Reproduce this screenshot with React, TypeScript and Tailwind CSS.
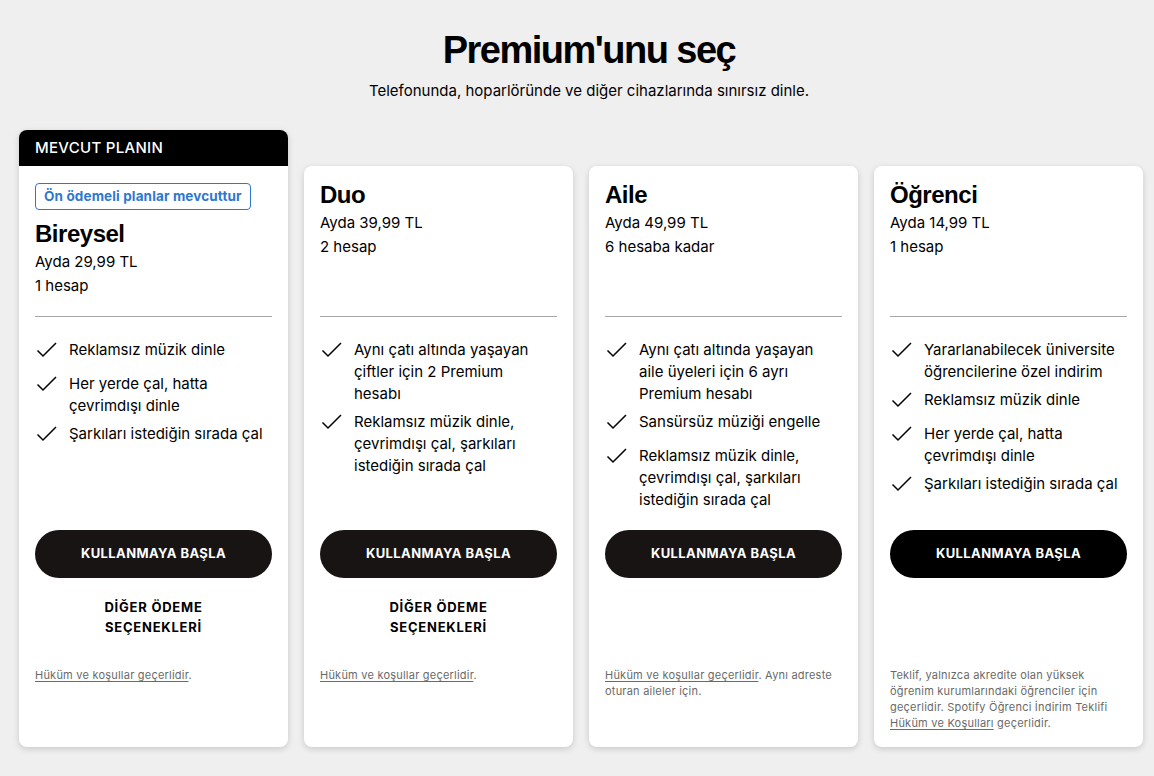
import React from "react";

type Plan = {
  name: string;
  price: string;
  accounts: string;
  features: string[];
  current?: boolean;
  otherOptions?: boolean;
  footer: React.ReactNode;
  buttonClass: string;
};

const link = "underline underline-offset-2";

const plans: Plan[] = [
  {
    name: "Bireysel",
    price: "Ayda 29,99 TL",
    accounts: "1 hesap",
    current: true,
    otherOptions: true,
    features: [
      "Reklamsız müzik dinle",
      "Her yerde çal, hatta çevrimdışı dinle",
      "Şarkıları istediğin sırada çal",
    ],
    footer: (
      <>
        <span className={link}>Hüküm ve koşullar geçerlidir</span>.
      </>
    ),
    buttonClass: "bg-[#191414]",
  },
  {
    name: "Duo",
    price: "Ayda 39,99 TL",
    accounts: "2 hesap",
    otherOptions: true,
    features: [
      "Aynı çatı altında yaşayan çiftler için 2 Premium hesabı",
      "Reklamsız müzik dinle, çevrimdışı çal, şarkıları istediğin sırada çal",
    ],
    footer: (
      <>
        <span className={link}>Hüküm ve koşullar geçerlidir</span>.
      </>
    ),
    buttonClass: "bg-[#191414]",
  },
  {
    name: "Aile",
    price: "Ayda 49,99 TL",
    accounts: "6 hesaba kadar",
    features: [
      "Aynı çatı altında yaşayan aile üyeleri için 6 ayrı Premium hesabı",
      "Sansürsüz müziği engelle",
      "Reklamsız müzik dinle, çevrimdışı çal, şarkıları istediğin sırada çal",
    ],
    footer: (
      <>
        <span className={link}>Hüküm ve koşullar geçerlidir</span>. Aynı adreste
        oturan aileler için.
      </>
    ),
    buttonClass: "bg-[#191414]",
  },
  {
    name: "Öğrenci",
    price: "Ayda 14,99 TL",
    accounts: "1 hesap",
    features: [
      "Yararlanabilecek üniversite öğrencilerine özel indirim",
      "Reklamsız müzik dinle",
      "Her yerde çal, hatta çevrimdışı dinle",
      "Şarkıları istediğin sırada çal",
    ],
    footer: (
      <>
        Teklif, yalnızca akredite olan yüksek öğrenim kurumlarındaki öğrenciler
        için geçerlidir. Spotify Öğrenci İndirim Teklifi{" "}
        <span className={link}>Hüküm ve Koşulları</span> geçerlidir.
      </>
    ),
    buttonClass: "bg-black",
  },
];

function Check() {
  return (
    <svg
      width="24"
      height="24"
      viewBox="0 0 24 24"
      fill="none"
      stroke="#000"
      strokeWidth="1.5"
      className="shrink-0"
    >
      <path d="M2.5 12.5l5.5 5.5L21 5" />
    </svg>
  );
}

function PlanCard({ plan }: { plan: Plan }) {
  return (
    <div
      className={`flex flex-col rounded-lg bg-white shadow-[0_2px_6px_rgba(0,0,0,0.16)] ${
        plan.current ? "" : "mt-9"
      }`}
    >
      {plan.current && (
        <div className="flex h-9 items-center rounded-t-lg bg-black px-4 text-[15px] font-medium tracking-[0.02em] text-white">
          MEVCUT PLANIN
        </div>
      )}
      <div className="flex flex-1 flex-col px-4 pb-4 pt-[15px]">
        <div className="h-[135px]">
          {plan.current && (
            <div className="mb-[10px] mt-[2px] inline-flex h-[27px] items-center rounded-[4px] border border-[#2e77d0] px-2 text-[13.5px] font-bold tracking-[0.01em] text-[#2e77d0]">
              Ön ödemeli planlar mevcuttur
            </div>
          )}
          <h2 className="font-['Liberation_Sans'] text-[24px] font-bold leading-[28px] tracking-[-0.02em]">
            {plan.name}
          </h2>
          <p className="mt-0.5 text-[15px] leading-6">{plan.price}</p>
          <p className="text-[15px] leading-6">{plan.accounts}</p>
        </div>
        <div className="h-px bg-[#a7a7a7]" />
        <ul className="flex h-[213px] flex-col gap-[6px] pt-[22px]">
          {plan.features.map((f) => (
            <li key={f} className="flex min-h-[28px] items-start gap-[10px] pr-[6px]">
              <span className="-mt-[1px]">
                <Check />
              </span>
              <span className="text-[15px] leading-[22px]">{f}</span>
            </li>
          ))}
        </ul>
        <button
          className={`h-12 w-full rounded-full text-[13px] font-bold tracking-[0.03em] text-white ${plan.buttonClass}`}
        >
          KULLANMAYA BAŞLA
        </button>
        <div className="h-[89px] pt-[19px] text-center text-[13px] font-bold leading-5 tracking-[0.06em]">
          {plan.otherOptions && (
            <>
              DİĞER ÖDEME
              <br />
              SEÇENEKLERİ
            </>
          )}
        </div>
        <p className="text-[11px] leading-4 tracking-[0.02em] text-[#6a6a6a]">
          {plan.footer}
        </p>
      </div>
    </div>
  );
}

export default function App() {
  return (
    <div
      className="min-h-screen bg-[#efefef] pl-[19px] pr-[11px] pb-8 text-black"
      style={{ fontFamily: "Inter, sans-serif" }}
    >
      <div className="flex flex-col items-center pl-4 pt-[29px]">
        <h1 className="font-['Liberation_Sans'] text-[38px] font-bold leading-[42px] tracking-[-0.04em]">
          Premium'unu seç
        </h1>
        <p className="mt-[9px] text-[15px] leading-[22px]">
          Telefonunda, hoparlöründe ve diğer cihazlarında sınırsız dinle.
        </p>
      </div>
      <div className="mt-[28px] grid grid-cols-4 gap-4">
        {plans.map((p) => (
          <PlanCard key={p.name} plan={p} />
        ))}
      </div>
    </div>
  );
}
